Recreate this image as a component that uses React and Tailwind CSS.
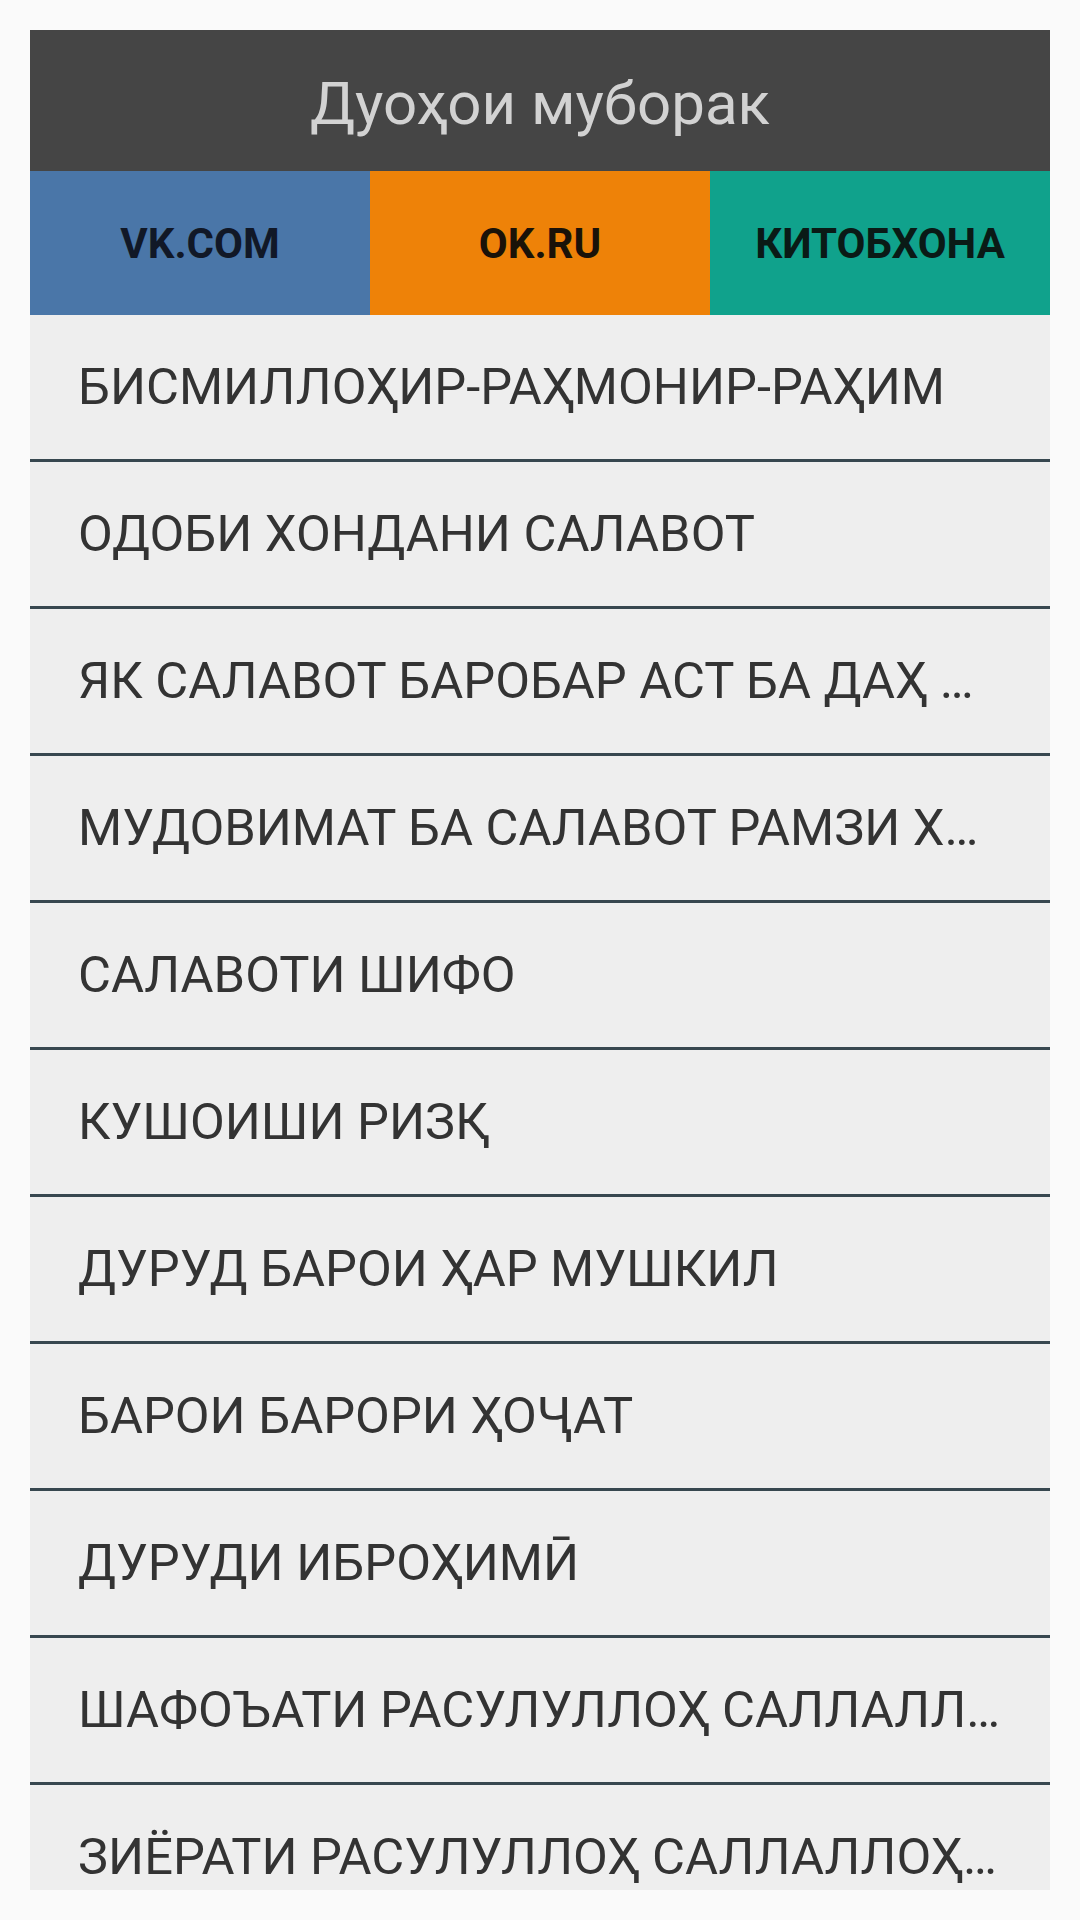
import React from "react";

const items = [
  "БИСМИЛЛОҲИР-РАҲМОНИР-РАҲИМ",
  "ОДОБИ ХОНДАНИ САЛАВОТ",
  "ЯК САЛАВОТ БАРОБАР АСТ БА ДАҲ …",
  "МУДОВИМАТ БА САЛАВОТ РАМЗИ Х…",
  "САЛАВОТИ ШИФО",
  "КУШОИШИ РИЗҚ",
  "ДУРУД БАРОИ ҲАР МУШКИЛ",
  "БАРОИ БАРОРИ ҲОҶАТ",
  "ДУРУДИ ИБРОҲИМӢ",
  "ШАФОЪАТИ РАСУЛУЛЛОҲ САЛЛАЛЛ…",
  "ЗИЁРАТИ РАСУЛУЛЛОҲ САЛЛАЛЛОҲ…",
];

export default function App() {
  return (
    <div
      className="w-[1080px] h-[1920px] bg-[#fafafa] pt-[30px] px-[30px] overflow-hidden"
      style={{ fontFamily: "Roboto, 'Noto Sans', sans-serif" }}
    >
      <div className="h-[1860px] overflow-hidden flex flex-col">
        <div className="h-[141px] shrink-0 bg-[#454545] flex items-center justify-center">
          <span className="text-[60px] leading-normal text-[#d2d2d2] mt-[6px]">Дуоҳои муборак</span>
        </div>
        <div className="h-[144px] shrink-0 grid grid-cols-3">
          <div className="bg-[#4a76a8] flex items-center justify-center">
            <span className="text-[42px] font-bold text-[#111827] leading-normal">VK.COM</span>
          </div>
          <div className="bg-[#ee8208] flex items-center justify-center">
            <span className="text-[42px] font-bold text-[#1a1208] leading-normal">OK.RU</span>
          </div>
          <div className="bg-[#10a28c] flex items-center justify-center">
            <span className="text-[42px] font-bold text-[#0a1a16] leading-normal">КИТОБХОНА</span>
          </div>
        </div>
        {items.map((t, i) => (
          <div
            key={i}
            className="h-[147px] shrink-0 bg-[#eeeeee] border-b-[3px] border-[#37474f] flex items-center pl-[48px] pr-[30px]"
          >
            <span className="text-[50.6px] leading-normal text-[#333333] whitespace-nowrap">
              {t}
            </span>
          </div>
        ))}
      </div>
    </div>
  );
}
